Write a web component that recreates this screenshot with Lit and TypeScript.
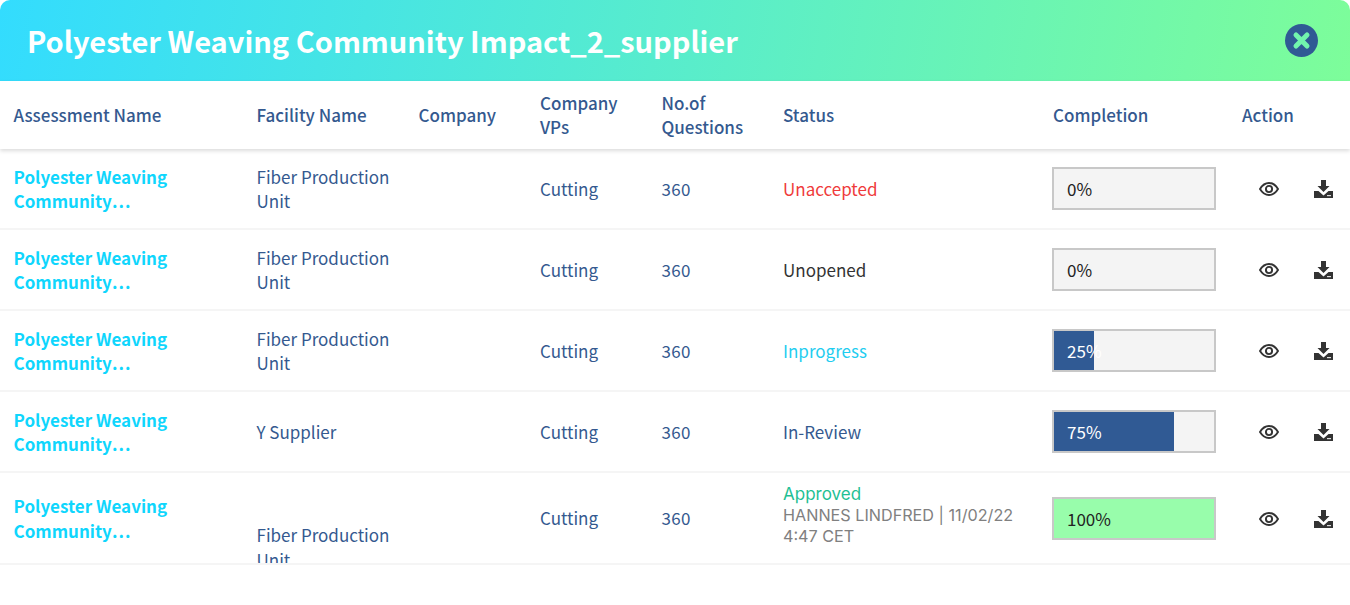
import {html, css, LitElement, svg} from 'lit';
import {customElement} from 'lit/decorators.js';

interface Row {
  facility: string;
  status: string;
  statusClass: string;
  pct: number;
  note?: string;
}

const rows: Row[] = [
  {facility: 'Fiber Production Unit', status: 'Unaccepted', statusClass: 'red', pct: 0},
  {facility: 'Fiber Production Unit', status: 'Unopened', statusClass: 'dark', pct: 0},
  {facility: 'Fiber Production Unit', status: 'Inprogress', statusClass: 'cyan', pct: 25},
  {facility: 'Y Supplier', status: 'In-Review', statusClass: 'blue', pct: 75},
  {facility: 'Fiber Production Unit', status: 'Approved', statusClass: 'green', pct: 100, note: 'HANNES LINDFRED | 11/02/22 4:47 CET'},
];

const eyeIcon = svg`<path d="M1 8c2.400-4 5.600-6 9-6s6.600 2 9 6c-2.400 4-5.600 6-9 6s-6.600-2-9-6z" fill="none" stroke="#333" stroke-width="1.900"/><circle cx="10" cy="8" r="3.100" fill="none" stroke="#333" stroke-width="1.900"/>`;
const downloadIcon = svg`<path d="M7 0h5v6h3.500l-6 6-6-6H7z" fill="#333"/><path d="M0 11h4.500l5 4.500 5-4.500H19v7H0z" fill="#333"/><rect x="13" y="15" width="4" height="1.200" fill="#ddd"/>`;

@customElement('app-root')
export class AppRoot extends LitElement {
  static styles = css`
    :host {
      display: block;
      width: 1350px;
      height: 605px;
      background: #fff;
      overflow: hidden;
      font-family: "Noto Sans CJK SC", "Source Sans Pro", "Noto Sans", sans-serif;
      font-size: 17px;
      color: #34598f;
    }
    .top {
      height: 81px;
      display: flex;
      align-items: center;
      justify-content: space-between;
      padding: 0 32px 0 27px;
      border-radius: 10px 10px 0 0;
      background: linear-gradient(100deg, #33dcfe 0%, #7dfd9a 100%);
    }
    .top h1 {
      margin: 0 0 2px;
      font-size: 29px;
      font-weight: 700;
      line-height: 40px;
      color: #fff;
    }
    .close {
      width: 33px;
      height: 33px;
      display: block;
    }
    .row {
      display: grid;
      grid-template-columns: 256.500px 162px 121.500px 121.500px 121.500px 269px 190px 108px;
      align-items: center;
      height: 81px;
      box-sizing: border-box;
      border-bottom: 2px solid #f5f5f5;
      line-height: 24px;
    }
    .head {
      height: 68px;
      border-bottom: none;
      font-weight: 500;
      box-shadow: 0 2px 4px rgba(0, 0, 0, 0.14);
      position: relative;
    }
    .first {
      padding-left: 13.500px;
    }
    .name {
      font-weight: 700;
      color: #0fd6fd;
      line-height: 24.500px;
      padding-top: 1px;
    }
    .dots {
      letter-spacing: 1px;
    }
    .num {
      letter-spacing: 0.3px;
    }
    .tall {
      height: 92px;
    }
    .clip {
      align-self: stretch;
      overflow: hidden;
      padding-top: 49px;
      box-sizing: border-box;
    }
    .fac {
      width: 140px;
      line-height: 24.500px;
      padding-top: 1px;
    }
    .head .completion {
      padding-left: 1px;
    }
    .red { color: #ef3b3b; }
    .dark { color: #333; }
    .cyan { color: #1fcdf0; }
    .blue { color: #34598f; }
    .green {
      color: #1fbf94;
      font-family: Inter, sans-serif;
      font-size: 17px;
      line-height: 21px;
    }
    .stack {
      padding-bottom: 6px;
    }
    .note {
      font-family: Inter, sans-serif;
      font-size: 16.200px;
      line-height: 21px;
      color: #808080;
      width: 240px;
    }
    .bar {
      width: 164px;
      height: 43px;
      box-sizing: border-box;
      border: 2px solid #c8c8c8;
      background: #f4f4f4;
      position: relative;
      color: #222;
    }
    .fill {
      height: 100%;
      background: #305a94;
    }
    .full .fill {
      background: #98fdab;
    }
    .pct {
      position: absolute;
      left: 13px;
      top: 0;
      line-height: 39px;
    }
    .light {
      color: #fff;
    }
    .actions {
      display: flex;
      align-items: center;
      gap: 35px;
      padding-left: 17px;
      padding-top: 1px;
    }
    .eye {
      width: 20px;
      height: 16px;
      display: block;
    }
    .down {
      width: 19px;
      height: 18px;
      display: block;
    }
  `;

  renderRow(r: Row) {
    const last = !!r.note;
    return html`<div class="row ${last ? 'tall' : ''}">
      <div class="first name">Polyester Weaving<br />Community<span class="dots">...</span></div>
      <div class="${last ? 'clip' : ''}"><div class="fac">${r.facility}</div></div>
      <div></div>
      <div>Cutting</div>
      <div class="num">360</div>
      <div class="${last ? 'stack' : ''}">
        <div class="${r.statusClass}">${r.status}</div>
        ${r.note ? html`<div class="note">${r.note}</div>` : ''}
      </div>
      <div>
        <div class="bar ${r.pct === 100 ? 'full' : ''}">
          <div class="fill" style="width:${r.pct}%"></div>
          <span class="pct ${r.pct > 0 && r.pct < 100 ? 'light' : ''}">${r.pct}%</span>
        </div>
      </div>
      <div class="actions">
        <svg class="eye" viewBox="0 0 20 16">${eyeIcon}</svg>
        <svg class="down" viewBox="0 0 19 18">${downloadIcon}</svg>
      </div>
    </div>`;
  }

  render() {
    return html`
      <div class="top">
        <h1>Polyester Weaving Community Impact_2_supplier</h1>
        <svg class="close" viewBox="0 0 33 33">
          <circle cx="16.500" cy="16.500" r="16.500" fill="#305a94"></circle>
          <path d="M11 11l11 11M22 11L11 22" stroke="#72f5ad" stroke-width="5" stroke-linecap="round"></path>
        </svg>
      </div>
      <div class="row head">
        <div class="first">Assessment Name</div>
        <div>Facility Name</div>
        <div>Company</div>
        <div>Company<br />VPs</div>
        <div>No.of<br />Questions</div>
        <div>Status</div>
        <div class="completion">Completion</div>
        <div>Action</div>
      </div>
      ${rows.map((r) => this.renderRow(r))}
    `;
  }
}
